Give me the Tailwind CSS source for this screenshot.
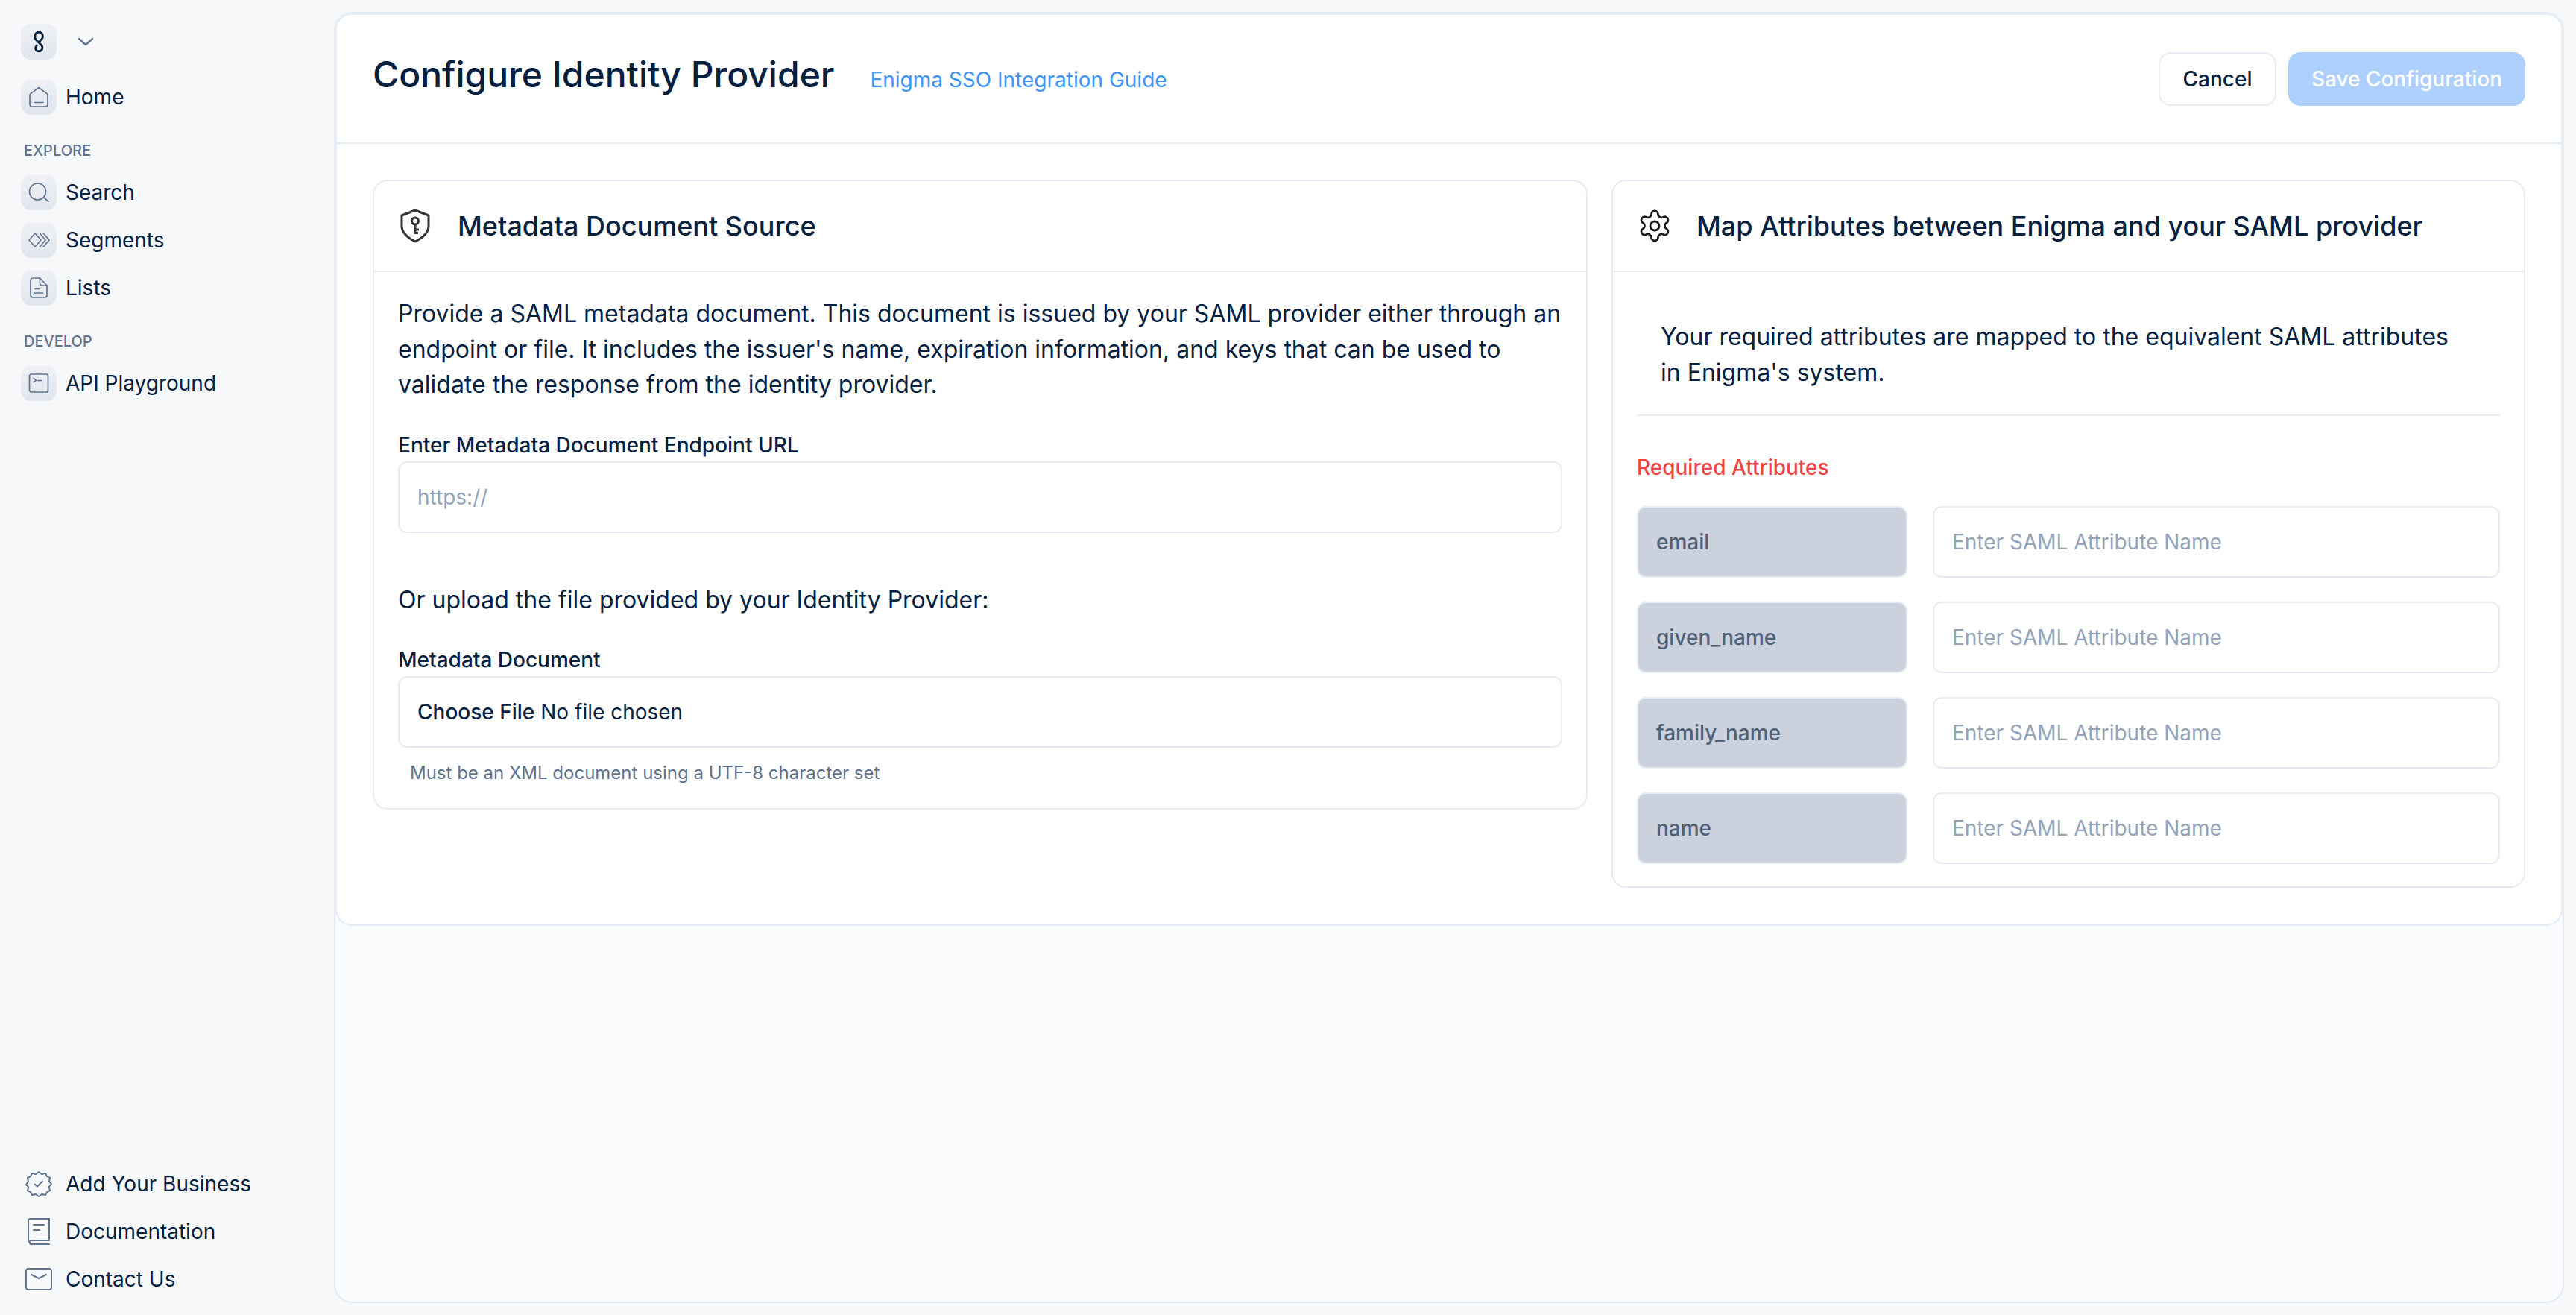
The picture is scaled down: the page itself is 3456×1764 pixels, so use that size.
<!DOCTYPE html>
<html lang="en">
<head>
    <meta charset="UTF-8">
    <title>Configure Identity Provider</title>
    <script src="https://cdn.jsdelivr.net/npm/@tailwindcss/browser@4"></script>
</head>
<body class="bg-[#f7f8fa] font-['Inter',sans-serif] text-[#05213f] text-[28px]">
<div class="flex h-[1764px] w-[3456px] overflow-hidden">
    <!-- Sidebar -->
    <aside class="w-[448px] shrink-0 flex flex-col justify-between pl-[28px] pt-[32px] pb-[26px]">
        <div>
            <div class="flex items-center h-[48px]">
                <div class="w-[48px] h-[48px] rounded-[14px] bg-gradient-to-b from-[#eef1f5] to-[#e1e6ed] flex items-center justify-center">
                    <svg class="w-[18px] h-[30px]" viewBox="0 0 16 28" fill="none" stroke="#05213f" stroke-width="2.600" stroke-linecap="round"><path d="M5.500 18.500C2.500 22 4 26 8 26c4.500 0 6-5 3-8L4.500 11.500C1.500 8 3.500 2 8 2c5 0 6.500 6 3.500 9L9 13.500"/></svg>
                </div>
                <svg class="w-[22px] h-[14px] ml-[28px]" viewBox="0 0 22 14" fill="none" stroke="#61758f" stroke-width="2.400" stroke-linecap="round" stroke-linejoin="round"><path d="M2 3l9 8 9-8"/></svg>
            </div>
            <a class="flex items-center gap-[12px] h-[48px] mt-[26px]">
                <div class="w-[48px] h-[48px] rounded-[14px] bg-gradient-to-b from-[#eef1f5] to-[#e1e6ed] flex items-center justify-center">
                    <svg class="w-[28px] h-[28px]" viewBox="0 0 28 28" fill="none" stroke="#61758f" stroke-width="1.700" stroke-linejoin="round" stroke-linecap="round"><path d="M2 11.500a2 2 0 0 1 .8-1.600L14 1.500l11.200 8.400a2 2 0 0 1 .8 1.600V24a3 3 0 0 1-3 3H5a3 3 0 0 1-3-3z"/><path d="M8 21.500h12"/></svg>
                </div>
                <span>Home</span>
            </a>
            <div class="mt-[34px] mb-[18px] pl-[4px] text-[20px] leading-[28px] font-medium text-[#61758f]">EXPLORE</div>
            <div class="flex flex-col gap-[16px]">
                <a class="flex items-center gap-[12px] h-[48px]">
                    <div class="w-[48px] h-[48px] rounded-[14px] bg-gradient-to-b from-[#eef1f5] to-[#e1e6ed] flex items-center justify-center">
                        <svg class="w-[28px] h-[26px]" viewBox="0 0 28 26" fill="none" stroke="#61758f" stroke-width="1.700" stroke-linecap="round"><circle cx="12.500" cy="12" r="11"/><path d="M21 20l6 5.500"/></svg>
                    </div>
                    <span>Search</span>
                </a>
                <a class="flex items-center gap-[12px] h-[48px]">
                    <div class="w-[48px] h-[48px] rounded-[14px] bg-gradient-to-b from-[#eef1f5] to-[#e1e6ed] flex items-center justify-center">
                        <svg class="w-[30px] h-[22px]" viewBox="0 0 30 22" fill="none" stroke="#61758f" stroke-width="1.600" stroke-linejoin="round"><path d="M10 2l8 9-8 9-8-9z"/><path d="M16 1.500l8 9.500-8 9.500"/><path d="M21 1.500l8 9.500-8 9.500"/></svg>
                    </div>
                    <span>Segments</span>
                </a>
                <a class="flex items-center gap-[12px] h-[48px]">
                    <div class="w-[48px] h-[48px] rounded-[14px] bg-gradient-to-b from-[#eef1f5] to-[#e1e6ed] flex items-center justify-center">
                        <svg class="w-[24px] h-[28px]" viewBox="0 0 24 28" fill="none" stroke="#61758f" stroke-width="1.700" stroke-linejoin="round" stroke-linecap="round"><path d="M4 1h9.500L23 11v13a3 3 0 0 1-3 3H4a3 3 0 0 1-3-3V4a3 3 0 0 1 3-3z"/><path d="M13.500 1v7a3 3 0 0 0 3 3H23"/><path d="M6.500 15.500h6M6.500 21h11"/></svg>
                    </div>
                    <span>Lists</span>
                </a>
            </div>
            <div class="mt-[34px] mb-[18px] pl-[4px] text-[20px] leading-[28px] font-medium text-[#61758f]">DEVELOP</div>
            <a class="flex items-center gap-[12px] h-[48px]">
                <div class="w-[48px] h-[48px] rounded-[14px] bg-gradient-to-b from-[#eef1f5] to-[#e1e6ed] flex items-center justify-center">
                    <svg class="w-[28px] h-[26px]" viewBox="0 0 28 26" fill="none" stroke="#61758f" stroke-width="1.700" stroke-linecap="round" stroke-linejoin="round"><rect x="1.500" y="1" width="25" height="24" rx="2.500"/><path d="M7 6.500l3.500 2.500L7 11.500M12.500 9.500h5"/></svg>
                </div>
                <span>API Playground</span>
            </a>
        </div>
        <div class="flex flex-col gap-[20px]">
            <a class="flex items-center gap-[12px] h-[44px]">
                <div class="w-[48px] flex justify-center">
                    <svg class="w-[36px] h-[36px]" viewBox="0 0 36 36" fill="none" stroke="#61758f" stroke-width="2" stroke-linejoin="round" stroke-linecap="round"><path d="M18 2l4 3 5-1 2 4 4 2-1 5 3 3-3 4 1 5-4 2-2 4-5-1-4 3-4-3-5 1-2-4-4-2 1-5-3-3 3-4-1-5 4-2 2-4 5 1z"/><path d="M12.500 18.500l3.500 3 7-7"/></svg>
                </div>
                <span>Add Your Business</span>
            </a>
            <a class="flex items-center gap-[12px] h-[44px]">
                <div class="w-[48px] flex justify-center">
                    <svg class="w-[30px] h-[36px]" viewBox="0 0 30 36" fill="none" stroke="#61758f" stroke-width="2" stroke-linejoin="round" stroke-linecap="round"><path d="M29 1H3.500A2.500 2.500 0 0 0 1 3.500V32"/><path d="M29 1v29H4a3 3 0 0 0 0 5h25"/><path d="M8 9h14M8 16h8"/></svg>
                </div>
                <span>Documentation</span>
            </a>
            <a class="flex items-center gap-[12px] h-[44px]">
                <div class="w-[48px] flex justify-center">
                    <svg class="w-[36px] h-[30px]" viewBox="0 0 36 30" fill="none" stroke="#61758f" stroke-width="2" stroke-linejoin="round" stroke-linecap="round"><rect x="1" y="1" width="34" height="28" rx="3"/><path d="M8 9l10 5 10-5"/></svg>
                </div>
                <span>Contact Us</span>
            </a>
        </div>
    </aside>

    <!-- Main panel -->
    <main class="mt-[16px] mb-[16px] mr-[16px] flex-1 rounded-[24px] border-2 border-[#e6ecf3] bg-[#fafbfd] overflow-hidden">
        <div class="bg-white border-2 border-[#e6ecf3] rounded-[22px] h-[1224px]">
            <header class="h-[173px] border-b-2 border-[#e6ecf3] px-[48px] pt-[50px] flex items-start justify-between">
                <div class="flex items-baseline gap-[48px] mt-[2px]">
                    <h1 class="text-[48px] leading-[56px] font-medium">Configure Identity Provider</h1>
                    <a class="text-[28px] text-[#3b94f6]">Enigma SSO Integration Guide</a>
                </div>
                <div class="flex gap-[16px]">
                    <button class="h-[72px] w-[158px] rounded-[16px] bg-white border-2 border-[#e6ecf3] text-[28px] font-medium">Cancel</button>
                    <button class="h-[72px] w-[318px] rounded-[16px] bg-[#add0fe] text-white text-[28px] font-medium">Save Configuration</button>
                </div>
            </header>
            <div class="grid grid-cols-[1630px_1fr] gap-[32px] items-start px-[48px] pt-[48px]">
                <!-- Metadata card -->
                <section class="rounded-[20px] border-2 border-[#e6ecf3] bg-white h-[845px]">
                    <div class="h-[122px] border-b-2 border-[#e6ecf3] flex items-center gap-[34px] pl-[32px]">
                        <svg class="w-[46px] h-[46px]" viewBox="0 0 46 46" fill="none" stroke="#333" stroke-width="3" stroke-linejoin="round"><path d="M23 2l18 7v14c0 10-8 16-18 21C13 39 5 33 5 23V9z"/><circle cx="23" cy="16.500" r="4.500"/><path d="M23 21v13M23 28h5M23 32.500h4"/></svg>
                        <h2 class="text-[36px] leading-[48px] font-medium">Metadata Document Source</h2>
                    </div>
                    <div class="px-[32px] pt-[32px]">
                        <p class="text-[32px] leading-[47.500px]">Provide a SAML metadata document. This document is issued by your SAML provider either through an endpoint or file. It includes the issuer's name, expiration information, and keys that can be used to validate the response from the identity provider.</p>
                        <label class="block mt-[37px] text-[28px] leading-[40px] font-medium">Enter Metadata Document Endpoint URL</label>
                        <input class="block w-full mt-[2px] h-[96px] rounded-[12px] border-2 border-[#e6ecf3] px-[24px] text-[28px] placeholder:text-[#94a3b8] outline-none" placeholder="https://">
                        <p class="mt-[66px] text-[32px] leading-[48px]">Or upload the file provided by your Identity Provider:</p>
                        <label class="block mt-[36px] text-[28px] leading-[40px] font-medium">Metadata Document</label>
                        <div class="mt-[2px] h-[96px] rounded-[12px] border-2 border-[#e6ecf3] px-[24px] flex items-center">
                            <input type="file" class="w-full text-[28px] file:mr-[8px] file:border-0 file:bg-transparent file:p-0 file:text-[28px] file:font-medium file:text-[#05213f]">
                        </div>
                        <p class="mt-[18px] pl-[16px] text-[24px] leading-[32px] text-[#5f7189]">Must be an XML document using a UTF-8 character set</p>
                    </div>
                </section>
                <!-- Attributes card -->
                <section class="rounded-[20px] border-2 border-[#e6ecf3] bg-white h-[950px]">
                    <div class="h-[122px] border-b-2 border-[#e6ecf3] flex items-center gap-[32px] pl-[32px]">
                        <svg class="w-[48px] h-[48px]" viewBox="0 0 24 24" fill="none" stroke="#1a1a1a" stroke-width="1.400" stroke-linejoin="round" stroke-linecap="round"><path d="M12.200 2h-.4a2 2 0 0 0-2 2v.2a2 2 0 0 1-1 1.700l-.4.300a2 2 0 0 1-2 0l-.2-.1a2 2 0 0 0-2.700.7l-.2.400a2 2 0 0 0 .7 2.700l.2.100a2 2 0 0 1 1 1.700v.5a2 2 0 0 1-1 1.700l-.2.100a2 2 0 0 0-.7 2.700l.2.400a2 2 0 0 0 2.700.7l.2-.1a2 2 0 0 1 2 0l.4.300a2 2 0 0 1 1 1.700v.2a2 2 0 0 0 2 2h.4a2 2 0 0 0 2-2v-.2a2 2 0 0 1 1-1.700l.4-.3a2 2 0 0 1 2 0l.2.100a2 2 0 0 0 2.700-.7l.2-.4a2 2 0 0 0-.7-2.700l-.2-.1a2 2 0 0 1-1-1.700v-.5a2 2 0 0 1 1-1.700l.2-.1a2 2 0 0 0 .7-2.700l-.2-.4a2 2 0 0 0-2.700-.7l-.2.100a2 2 0 0 1-2 0l-.4-.3a2 2 0 0 1-1-1.700V4a2 2 0 0 0-2-2z"/><circle cx="12" cy="12" r="3"/></svg>
                        <h2 class="text-[36px] leading-[48px] font-medium">Map Attributes between Enigma and your SAML provider</h2>
                    </div>
                    <div class="px-[32px]">
                        <div class="border-b-2 border-[#e6ecf3] pl-[32px] pr-[64px] pt-[63px] pb-[32px] h-[193px]">
                            <p class="text-[32px] leading-[48px]">Your required attributes are mapped to the equivalent SAML attributes in Enigma's system.</p>
                        </div>
                        <div class="mt-[49px] text-[28px] leading-[40px] font-medium text-[#ef4444]">Required Attributes</div>
                        <div class="mt-[32px] flex flex-col gap-[32px]">
                            <div class="grid grid-cols-[363px_1fr] gap-[34px]">
                                <div class="h-[96px] rounded-[12px] border-2 border-[#e6ecf3] bg-[#cbd2dd] px-[24px] flex items-center font-medium text-[#4f6178]">email</div>
                                <input class="h-[96px] w-full rounded-[12px] border-2 border-[#e6ecf3] px-[24px] text-[28px] placeholder:text-[#94a3b8] outline-none" placeholder="Enter SAML Attribute Name">
                            </div>
                            <div class="grid grid-cols-[363px_1fr] gap-[34px]">
                                <div class="h-[96px] rounded-[12px] border-2 border-[#e6ecf3] bg-[#cbd2dd] px-[24px] flex items-center font-medium text-[#4f6178]">given_name</div>
                                <input class="h-[96px] w-full rounded-[12px] border-2 border-[#e6ecf3] px-[24px] text-[28px] placeholder:text-[#94a3b8] outline-none" placeholder="Enter SAML Attribute Name">
                            </div>
                            <div class="grid grid-cols-[363px_1fr] gap-[34px]">
                                <div class="h-[96px] rounded-[12px] border-2 border-[#e6ecf3] bg-[#cbd2dd] px-[24px] flex items-center font-medium text-[#4f6178]">family_name</div>
                                <input class="h-[96px] w-full rounded-[12px] border-2 border-[#e6ecf3] px-[24px] text-[28px] placeholder:text-[#94a3b8] outline-none" placeholder="Enter SAML Attribute Name">
                            </div>
                            <div class="grid grid-cols-[363px_1fr] gap-[34px]">
                                <div class="h-[96px] rounded-[12px] border-2 border-[#e6ecf3] bg-[#cbd2dd] px-[24px] flex items-center font-medium text-[#4f6178]">name</div>
                                <input class="h-[96px] w-full rounded-[12px] border-2 border-[#e6ecf3] px-[24px] text-[28px] placeholder:text-[#94a3b8] outline-none" placeholder="Enter SAML Attribute Name">
                            </div>
                        </div>
                    </div>
                </section>
            </div>
        </div>
    </main>
</div>
</body>
</html>
